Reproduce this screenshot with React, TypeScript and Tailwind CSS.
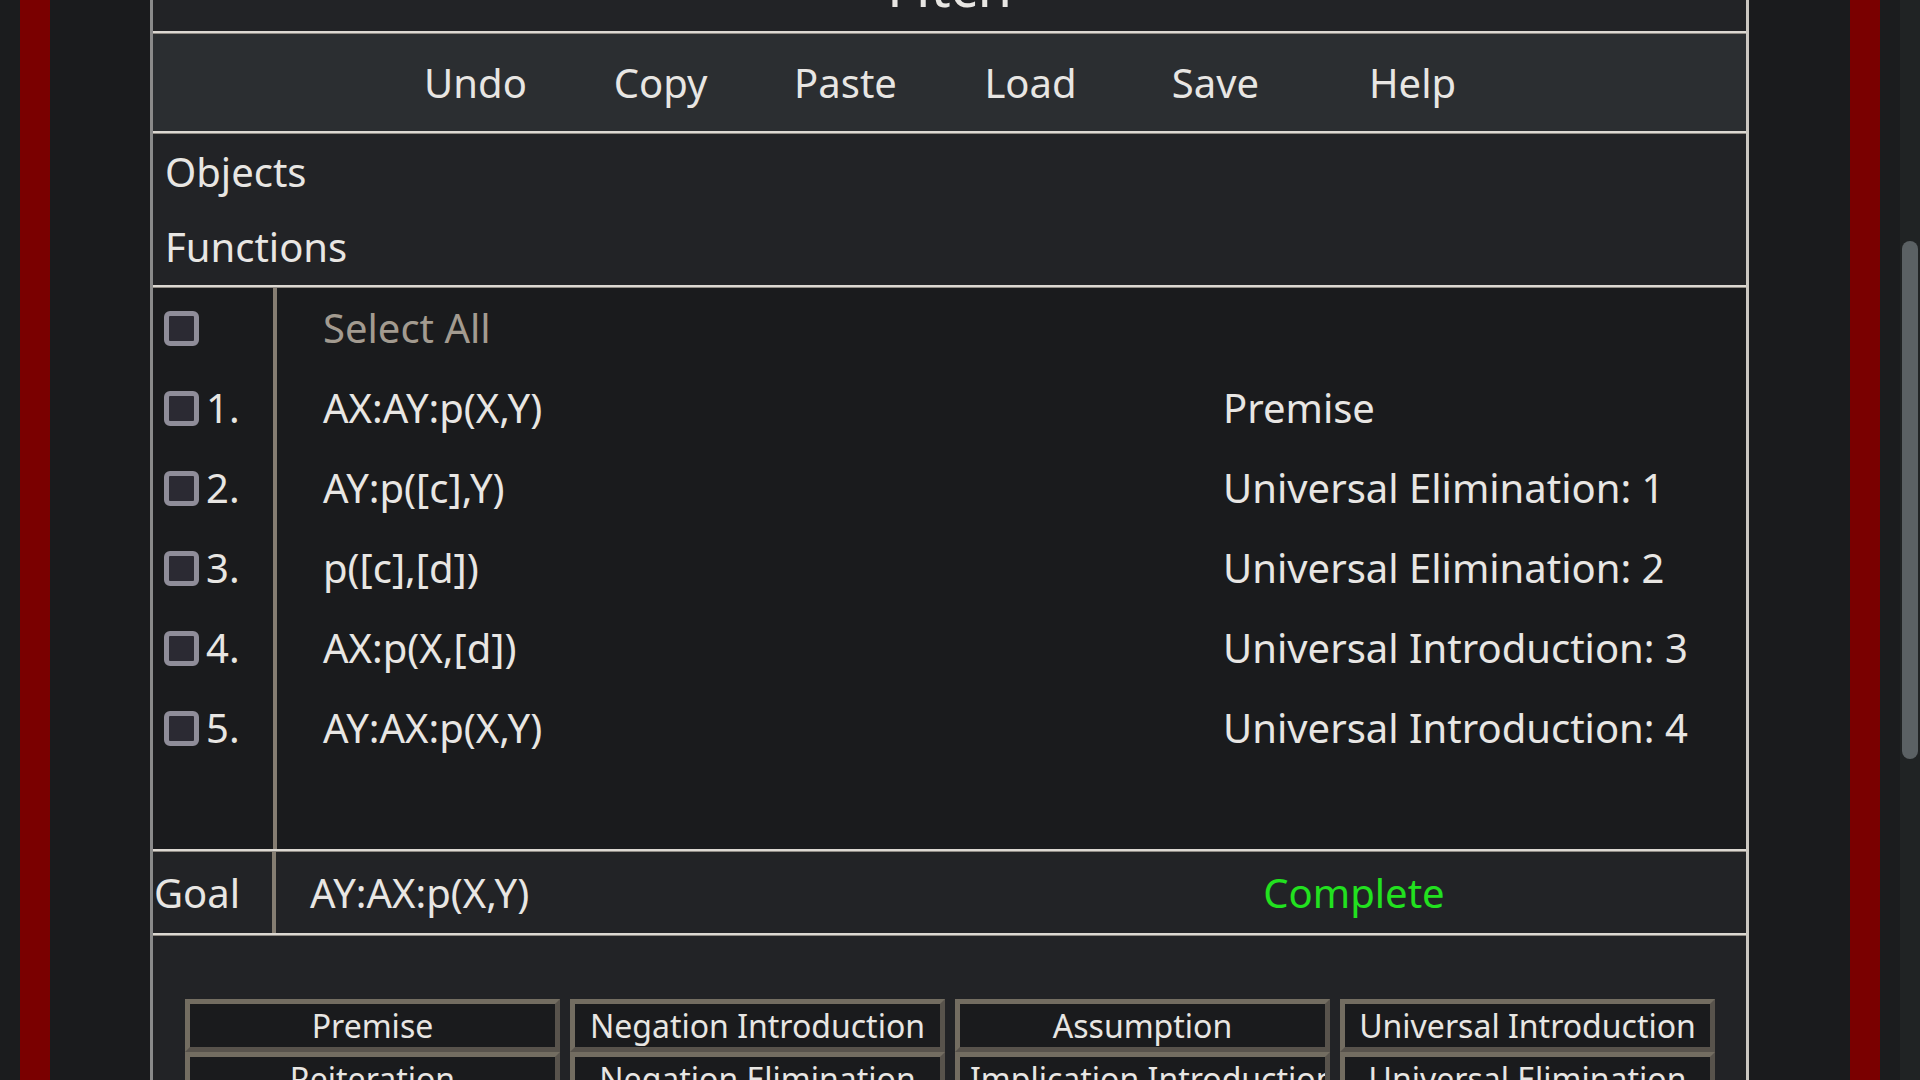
import React from "react";

const proofRows = [
  { n: "1.", formula: "AX:AY:p(X,Y)", why: "Premise" },
  { n: "2.", formula: "AY:p([c],Y)", why: "Universal Elimination: 1" },
  { n: "3.", formula: "p([c],[d])", why: "Universal Elimination: 2" },
  { n: "4.", formula: "AX:p(X,[d])", why: "Universal Introduction: 3" },
  { n: "5.", formula: "AY:AX:p(X,Y)", why: "Universal Introduction: 4" },
];

const rules = [
  "Premise",
  "Negation Introduction",
  "Assumption",
  "Universal Introduction",
  "Reiteration",
  "Negation Elimination",
  "Implication Introduction",
  "Universal Elimination",
];

const tools = ["Undo", "Copy", "Paste", "Load", "Save"];

const Sep = () => <div className="h-[3px] border-t-2 border-[#dcd8d2] bg-[#8f8a84]" />;

const Box = () => (
  <span className="inline-block h-[35px] w-[35px] shrink-0 rounded-[6px] border-[5px] border-[#8f8d99] bg-[#2b2a33]" />
);

export default function App() {
  return (
    <div className="flex h-screen w-full overflow-hidden bg-[#1a1b1d] font-['Noto_Sans',sans-serif] text-[40px] text-[#e8e6e3]">
      <div className="w-[20px] shrink-0 bg-[#1b1c1e]" />
      <div className="w-[30px] shrink-0 bg-[#7a0000]" />

      <div className="flex-1 px-[100px] pr-[101px]">
        <div className="-mt-[53px] border-x-[3px] border-l-[#8a8a8a] border-r-[#cbc7c1]">
          {/* title */}
          <div className="h-[84px] bg-[#222326] text-center text-[56px] leading-[76px]">Fitch</div>
          <Sep />

          {/* toolbar */}
          <div className="flex h-[97px] items-center bg-[#2b2e31] pl-[230px] leading-[60px]">
            {tools.map((t) => (
              <div key={t} className="w-[185px] text-center">
                {t}
              </div>
            ))}
            <div className="ml-[12px] w-[185px] text-center">Help</div>
          </div>
          <Sep />

          {/* objects / functions */}
          <div className="h-[151px] bg-[#222326] pl-[12px]">
            <div className="h-[75px] leading-[75px]">Objects</div>
            <div className="h-[75px] leading-[75px]">Functions</div>
          </div>
          <Sep />

          {/* proof */}
          <div className="flex h-[561px] bg-[#1a1b1d]">
            <div className="w-[124px] shrink-0 border-r-[4px] border-[#857d72] pl-[11px]">
              <div className="flex h-[80px] items-center">
                <Box />
              </div>
              {proofRows.map((r) => (
                <div key={r.n} className="flex h-[80px] items-center gap-[7px]">
                  <Box />
                  <span>{r.n}</span>
                </div>
              ))}
            </div>
            <div className="flex-1 pl-[46px]">
              <div className="flex h-[80px] items-center text-[#a39b90]">Select All</div>
              {proofRows.map((r) => (
                <div key={r.n} className="grid h-[80px] grid-cols-[900px_1fr] items-center">
                  <span>{r.formula}</span>
                  <span>{r.why}</span>
                </div>
              ))}
            </div>
          </div>
          <Sep />

          {/* goal */}
          <div className="flex h-[81px] items-center bg-[#222326]">
            <div className="flex h-full w-[123px] shrink-0 items-center border-r-[4px] border-[#857d72] pl-[1px]">
              Goal
            </div>
            <div className="grid flex-1 grid-cols-[686px_1fr] items-center pl-[34px]">
              <span>AY:AX:p(X,Y)</span>
              <span className="pr-[34px] text-center text-[#22e11f]">Complete</span>
            </div>
          </div>
          <Sep />

          {/* rules */}
          <div className="h-[400px] bg-[#222326] pl-[32px] pt-[63px]">
            <div className="grid w-[1530px] grid-cols-4 gap-x-[10px]">
              {rules.map((r) => (
                <div
                  key={r}
                  className="h-[53px] overflow-hidden whitespace-nowrap border-[5px] border-b-[#58534c] border-l-[#736d61] border-r-[#58534c] border-t-[#736d61] bg-[#1a1b1d] px-[10px] text-center text-[32px] leading-[43px]"
                >
                  {r}
                </div>
              ))}
            </div>
          </div>
        </div>
      </div>

      <div className="w-[30px] shrink-0 bg-[#7a0000]" />
      <div className="w-[20px] shrink-0 bg-[#1b1c1e]" />
      <div className="w-[20px] shrink-0 bg-[#202324] pt-[241px]">
        <div className="mx-auto h-[518px] w-[16px] rounded-full bg-[#5b6164]" />
      </div>
    </div>
  );
}
